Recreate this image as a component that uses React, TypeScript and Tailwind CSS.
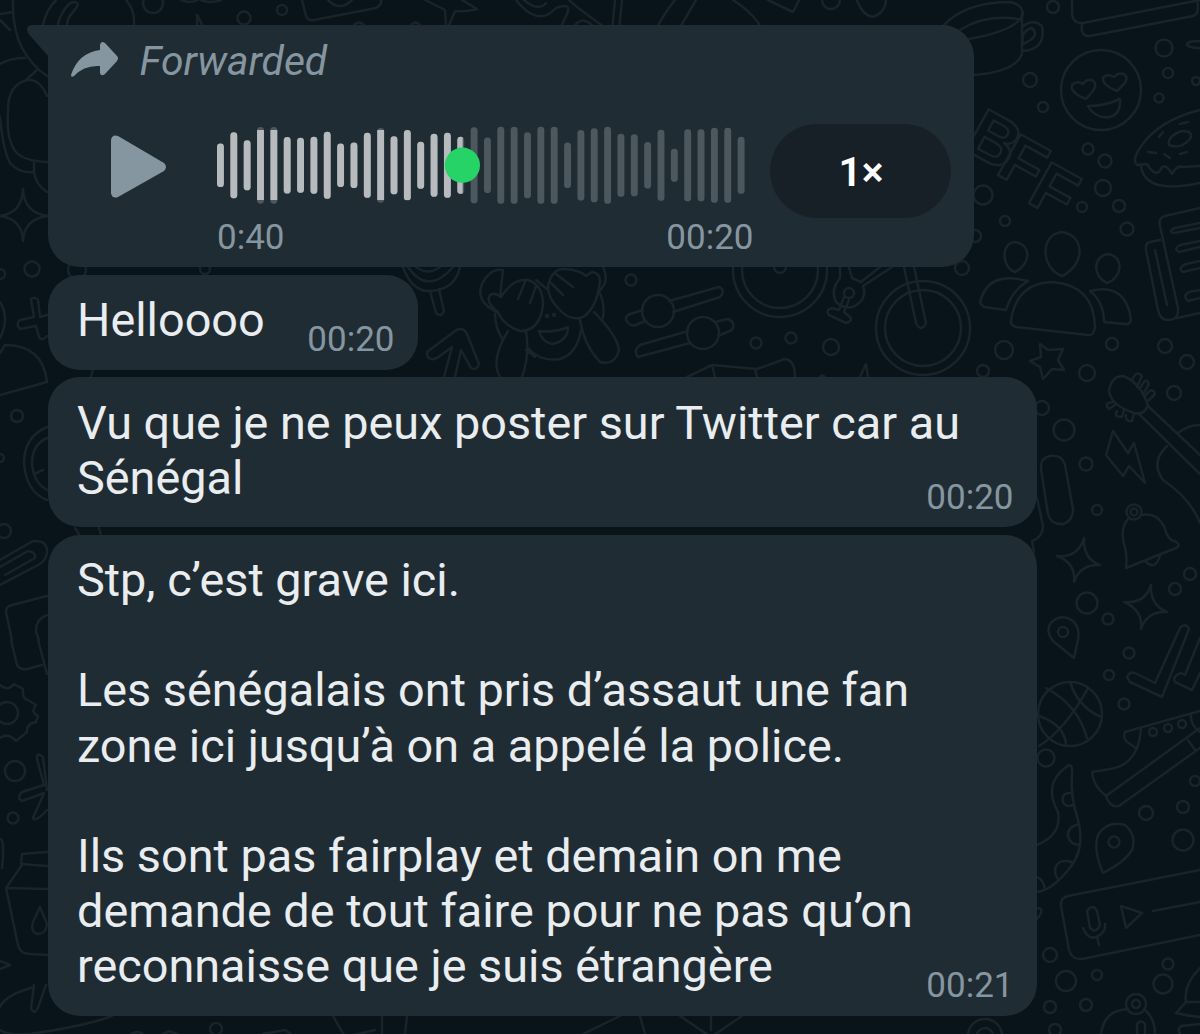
import React from 'react';
import clsx from 'clsx';

// [cx, cy, r]
const BUBBLES: number[][] = [
  [153, 3, 10], [244, 18, 6.5], [282, 10, 5], [32, 269, 7.5], [0, 274, 5], [831, 0, 9],
  [1053, 7, 6], [1164, 48, 8.5], [1168, 73, 5], [1159, 98, 4.5], [1196, 81, 4], [1030, 80, 7], [1043, 107, 5],
  [1088, 149, 5.5], [1105, 161, 6.5], [1103, 188, 8], [1082, 207, 5], [1119, 206, 6], [1127, 229, 6.5],
  [983, 195, 9.5], [1005, 221, 5], [975, 236, 6], [962, 268, 7],
  [831, 347, 8], [983, 371, 6], [1004, 350, 9], [1087, 373, 8], [1112, 344, 6], [1165, 346, 7], [1187, 362, 7],
  [1174, 393, 7], [1042, 408, 7], [1064, 430, 10.5], [1086, 464, 6.5], [1097, 510, 5],
  [1190, 574, 6], [1175, 589, 6], [1087, 603, 10.5], [1108, 619, 5.5], [1129, 653, 5.5], [1109, 675, 5], [1124, 704, 5.5],
  [1046, 758, 8.5], [1195, 781, 5], [1183, 807, 6], [1146, 813, 7], [1183, 840, 10.5],
  [1050, 955, 7], [1066, 981, 10], [1097, 975, 5], [1168, 964, 5.5], [1163, 984, 9.5], [1050, 1007, 6], [1086, 1005, 6], [1055, 1030, 6],
  [631, 280, 5.5], [756, 343, 5.5], [791, 338, 5.5], [17, 416, 6], [0, 458, 4], [4, 531, 7],
  [15, 771, 10], [13, 818, 5.5], [1101, 90, 40], [923, 328, 47], [923, 328, 38], [780, 270, 47], [780, 270, 38], [780, 267, 6],
  [849, 293, 5], [1134, 512, 7.5], [1134, 512, 3.5], [1063, 632, 5], [1070, 714, 32],
  [1153, 732, 4], [1168, 728, 4], [1182, 724, 4], [1114, 842, 5.5], [1136, 1004, 10], [1136, 1004, 4],
  [658, 311, 16], [703, 333, 16], [7, 713, 11], [77, 270, 9], [439, 1051, 5], [216, 1029, 6], [523, 1053, 10],
  [985, 1036, 8], [985, 1036, 17], [205, 269, 5], [547, 316, 1], [554, 315, 1],
];

const DOODLES: string[] = [
  // top left
  'M13 0Q12 28 22 48Q32 66 47 76M0 14L13 12M0 20L10 30M0 64Q10 58 25 58M43 25Q46 10 56 0M58 24Q61 12 69 4Q75 0 78 4Q77 8 73 12Q68 17 67 24M126 0Q135 10 134 25',
  'M37 70L26 80M47 96Q40 79 28 80Q8 84 8 110Q6 140 16 152Q24 161 47 162M0 117Q3 150 10 163Q20 174 34 172L34 163M34 172Q36 185 47 192',
  'M23 189Q24 213 48 216Q24 219 23 241Q22 219 0 216Q22 213 23 189Z',
  'M181 0Q190 4 198 0M201 0Q210 4 221 0M197 25V15Q200 20 202 25M302 0L306 16Q308 21 314 20L376 8Q382 5 381 0M328 0Q340 12 352 0M354 25Q359 20 364 25M411 25Q415 20 420 25',
  'M425 0L445 10L446 25M449 25L455 11Q465 12 477 9L462 0M516 0Q538 28 556 8Q572 2 567 14L559 31M524 0Q538 12 546 3M569 0L577 7Q590 17 610 31M571 31Q582 10 597 31M615 0L612 31M622 0L619 31M675 0Q665 12 655 31M696 0L678 31M733 0Q755 14 763 31M768 0L793 12L799 0',
  // cup, book
  'M857 0Q862 15 873 17Q885 13 886 0M943 26Q965 2 1010 2Q1022 4 1023 14Q1018 30 969 39M960 30Q985 14 1018 19M1022 14V54Q1015 72 973 75M1022 27Q1033 18 1042 26Q1046 50 1022 51M1023 44Q1020 31 1032 28Q1041 36 1023 44',
  'M1072 0V14Q1073 24 1083 23L1200 0M1082 24Q1080 37 1090 36L1193 16Q1200 14 1197 0M1200 41Q1186 41 1187 45Q1190 48 1200 48',
  // eyes and smile
  'M1086 99Q1070 93 1072 85Q1077 80 1083 84Q1086 79 1092 80Q1098 84 1093 91ZM1117 91Q1102 85 1103 78Q1107 73 1114 77Q1118 72 1124 74Q1129 78 1124 84Z',
  'M1088 106Q1105 106 1120 99Q1121 114 1110 117Q1095 119 1088 106Z',
  // donut
  'M1200 110Q1160 120 1142 145Q1131 160 1137 165L1147 164Q1157 180 1162 167Q1166 164 1172 174Q1177 165 1182 167L1200 166M1141 166Q1145 195 1200 183M1169 145Q1167 136 1182 131Q1194 131 1190 139Q1180 150 1169 145M1180 124L1188 122M1163 132L1159 137M1148 152L1156 153M1164 154L1170 158M1180 154L1187 152',
  // people
  'M1015 242C1000 243 1002 268 1015 272C1030 265 1033 245 1015 242ZM1062 232C1040 234 1040 268 1062 276C1085 265 1086 236 1062 232ZM1108 254C1093 256 1092 276 1107 283C1122 278 1125 257 1108 254Z',
  'M980 303Q987 270 1028 281Q1012 290 1006 310L984 307ZM1011 320Q1017 283 1052 282Q1094 285 1095 327Q1094 336 1088 335L1016 327Q1010 325 1011 320ZM1090 291Q1126 282 1131 320Q1130 325 1125 324L1104 322Q1104 302 1090 291Z',
  // newspaper
  'M1200 208L1165 216Q1158 218 1160 226L1178 308Q1179 320 1168 320Q1160 320 1158 310L1146 250Q1145 243 1150 242L1160 240M1155 250L1167 305M1177 318L1200 313M1200 223L1175 228Q1168 231 1174 233L1200 228M1200 241L1180 245Q1173 249 1179 252L1200 247M1200 261L1186 264Q1177 268 1183 272L1200 268M1200 290L1189 292Q1182 296 1188 301L1200 298',
  // bike
  'M904 267L916 323Q921 333 926 323L914 267M840 267V278Q830 290 836 302Q850 314 862 300Q866 292 863 286L892 267M849 267L852 278L861 282L880 267M844 297L839 310L832 308Q825 310 829 315L846 323Q853 321 850 317L844 312L849 300',
  'M1040 344L1048 350L1063 349L1058 360L1064 370L1052 369L1043 379L1040 367L1030 361L1041 357Z',
  // guitar, bolt
  'M1123 376Q1140 382 1148 405Q1144 416 1134 413Q1110 405 1109 390Q1112 376 1123 376ZM1132 381Q1136 369 1142 376L1137 387M1141 387Q1146 376 1149 384L1143 394M1146 395Q1152 386 1155 394L1149 400M1113 402Q1103 403 1109 409L1115 405M1117 411Q1113 417 1122 417L1124 410M1126 415Q1125 422 1132 421L1134 413M1148 406L1200 455M1138 413L1200 474M1178 433Q1188 425 1200 425M1167 446Q1150 462 1163 480Q1190 498 1200 523',
  'M1113 431L1128 453L1134 443L1145 483L1129 466L1123 476L1106 455Z',
  'M1041 469Q1040 458 1050 456Q1062 454 1065 465L1073 509Q1073 521 1063 524Q1051 525 1048 514ZM1037 498L1043 526Q1043 537 1032 541L1034 552',
  'M1129 518Q1121 525 1123 540Q1128 555 1126 568L1176 548Q1182 544 1174 541Q1169 540 1166 532Q1160 512 1141 515M1146 562Q1156 571 1160 555',
  'M1084 538Q1083 559 1100 565Q1080 564 1074 582Q1076 563 1057 556Q1078 558 1084 538ZM1151 585Q1150 605 1167 612Q1147 611 1141 629Q1143 610 1124 602Q1145 604 1151 585Z',
  'M1074 658L1053 641Q1044 629 1053 621Q1063 613 1074 622Q1080 628 1078 640Z',
  'M1127 677Q1130 671 1135 673L1155 683L1180 628Q1186 622 1189 629L1162 697L1130 682ZM1200 638L1185 675L1181 673Q1172 676 1175 682L1192 690L1200 673',
  // ball, shoe
  'M1039 746Q1065 730 1088 688M1046 688Q1078 705 1087 738M1070 682Q1078 707 1101 717M1039 716Q1065 725 1066 745',
  'M1200 711L1125 732Q1123 738 1126 741L1137 749M1141 729Q1138 765 1110 769L1092 772Q1093 786 1106 796Q1110 808 1119 806L1200 748M1106 796L1200 728M1188 740L1195 750M1191 714Q1190 725 1200 732',
  // tentacle
  'M1037 845Q1062 835 1058 812Q1043 785 1065 768Q1073 760 1072 775Q1070 795 1078 820Q1086 850 1068 870Q1052 890 1037 892M1070 793Q1061 793 1063 802Q1066 808 1073 805M1079 824Q1067 827 1068 836Q1070 845 1080 845M1072 862Q1056 858 1055 871Q1055 876 1059 880M1037 877Q1043 879 1045 889M1037 908Q1046 908 1037 919',
  'M1103 873Q1093 850 1098 835Q1107 820 1125 825Q1137 835 1132 850Q1125 862 1103 873Z',
  // voice card
  'M1200 870L1068 896Q1060 898 1061 906L1069 950Q1072 960 1082 959L1200 935M1087 911Q1093 903 1097 911L1100 925Q1096 934 1090 928ZM1083 928Q1088 940 1096 937Q1106 933 1105 924M1097 937L1099 945M1121 906L1142 913L1126 928ZM1153 911L1200 902',
  'M1101 1034Q1104 1010 1128 1009M1144 1009Q1155 1018 1155 1034M1137 1034V1024Q1141 1019 1145 1024V1034M1200 968Q1183 985 1186 1002L1200 1002M1186 1002L1176 1013Q1188 1016 1200 1017M1200 1024L1181 1026Q1177 1030 1180 1034',
  // magnifier, arrow
  'M403 267Q412 292 430 291Q455 290 460 267M408 267Q428 296 453 267M416 267Q428 276 440 267M430 291L436 313Q441 318 444 311L439 289M427 352L455 331Q463 326 467 334L479 364Q477 371 471 368L461 350L455 377M444 377L452 347L437 358Q427 362 427 352',
  // face behind hands
  'M498 312Q485 302 490 295Q495 292 501 297Q513 278 528 280Q543 285 543 305Q540 331 520 331Q503 325 498 312ZM525 282L518 299M536 286L530 303M548 286Q552 268 565 269Q580 270 586 276L592 272Q600 273 600 281Q597 308 583 317Q570 322 558 308Q548 298 548 286ZM556 274L573 287M551 283L563 295M497 312Q475 302 482 284Q490 268 503 270L500 297M536 280L548 290M495 314Q495 328 503 340M528 348Q540 362 560 359Q577 354 581 330M508 331Q490 360 500 377M526 331Q530 355 522 377M526 350L535 357M580 320Q584 345 600 362Q615 366 619 350Q617 335 594 312M603 267Q610 282 599 291Q605 303 603 318',
  'M539 331Q555 333 568 327Q568 341 552 344Q542 342 539 331Z',
  'M643 310L633 313Q625 315 626 320Q630 327 636 325L645 321M673 312L720 297Q726 290 719 287L669 301M688 331L640 345Q633 350 638 357L690 343M715 322L728 319Q736 322 732 330L718 336M687 377L712 365L757 369L785 359Q795 360 795 377M712 365L715 377M755 369L757 377M820 377Q822 374 825 377M860 377L866 364L868 377',
  // left edge
  'M31 299Q35 296 38 300L40 317L47 315M31 299L34 317L20 320Q15 324 20 329L36 326L39 337Q42 342 47 336M0 395L47 382Q43 345 5 345L0 353M0 302Q10 318 0 338M93 369L91 377M47 427Q24 437 24 463Q26 492 47 500M47 438Q32 445 32 463Q33 482 47 490M34 474L43 470',
  'M0 560L33 541Q48 540 47 553Q45 562 38 565L0 585M0 567L28 551Q36 552 35 558L5 575M75 528Q78 532 79 535M99 528L101 535M12 640L6 612Q6 606 12 605L47 596M47 615Q35 620 36 632L39 640M11 640L17 665Q20 670 27 669L42 665M38 640L47 674',
  'M0 685Q8 692 14 684L23 689Q22 699 28 700L36 705Q30 712 38 716L36 722Q26 724 27 732L16 741Q8 732 0 738M47 790L43 757Q37 751 37 759L44 785L22 792Q16 798 22 801L44 793L33 818Q35 823 47 810M0 839Q5 839 2 868M47 852L22 854L21 864L47 866M22 865L6 888L47 889M6 888L18 945Q20 954 30 954L47 955M40 907L33 922Q30 932 38 934Q46 934 47 924ZM0 961L10 965L0 969',
  'M34 985L31 1008Q35 1018 40 1002L46 985M34 987Q5 995 0 1007M0 1030Q10 1036 30 1034Q85 1026 112 1016M131 1034Q138 1030 143 1034M163 1034L169 1031L192 1040M263 1034L285 1030L291 1034M333 1016L345 1037L375 1030M382 1016V1034M405 1034L407 1016M583 1034L620 1016M640 1016L645 1034M680 1016L711 1037L742 1016M711 1030V1016',
];

const Wallpaper = () => (
  <svg
    className="col-start-1 row-start-1"
    width="1200"
    height="1034"
    viewBox="0 0 1200 1034"
    fill="none"
    stroke="#18232a"
    strokeWidth="2.5"
    strokeLinecap="round"
    strokeLinejoin="round"
  >
    {DOODLES.map((d, i) => <path key={i} d={d} />)}
    {BUBBLES.map(([cx, cy, r], i) => <circle key={i} cx={cx} cy={cy} r={r} />)}
    <g fontFamily="'Liberation Sans', sans-serif" fontSize="68" fontWeight="700">
      <text transform="translate(962 148) rotate(29)">B</text>
      <text transform="translate(994 173) rotate(29)">F</text>
      <text transform="translate(1025 201) rotate(29)">F</text>
    </g>
  </svg>
);

// Height of every bar in the voice note wave
const WAVE = [
  43.5, 66, 50, 76.7, 76.7, 56.5, 55, 57, 67, 43.5, 45.5, 65, 74.7, 58, 70.5, 47, 63, 65, 57, 76,
  55.5, 77, 77, 66, 77, 77, 45.5, 70.5, 74, 77, 63, 62, 46.5, 71, 33, 72, 72, 75, 75, 57,
];

const Waveform = () => {
  const bars = WAVE.map((h, i) => (
    <rect key={i} x={i * 13.35} y={39.3 - h / 2} width="6.9" height={h} rx="3.4" />
  ));
  return (
    <svg className="block" width="536" height="78" viewBox="0 0 536 78">
      <clipPath id="played"><rect x="0" y="4" width="245.7" height="70" /></clipPath>
      <g fill="#4d575e">{bars}</g>
      <g fill="#b7bbbe" clipPath="url(#played)">{bars}</g>
      <circle cx="245.4" cy="39.2" r="17.6" fill="#25d366" />
    </svg>
  );
};

interface MessageProps {
  lines: string[];
  time: string;
  className: string;
}

const Time = ({ children }: { children: string }) => (
  <span className="text-[35px] leading-[40px] text-[#8696a0] whitespace-nowrap">{children}</span>
);

const Message: React.FC<MessageProps> = ({ lines, time, className }) => (
  <div className={clsx('flex justify-between rounded-[32px] bg-[#202c33] pl-[29.5px] pr-[23.5px] pt-[18.5px]', className)}>
    <div className="flex w-0 flex-col items-start text-[46.8px] leading-[55.2px] text-[#e9edef] whitespace-nowrap">
      {lines.map((line, i) => (
        <p key={i} className="h-[55.2px]">{line}</p>
      ))}
    </div>
    <div className="flex items-end">
      <Time>{time}</Time>
    </div>
  </div>
);

const VoiceNote = () => (
  <div className="relative h-[242px] w-[926px] rounded-[32px] rounded-tl-none bg-[#202c33]">
    <svg className="absolute -left-[21px] top-0" width="22" height="32" viewBox="0 0 22 32" fill="#202c33">
      <path d="M5 0H22V32L1.5 9Q-2.500 1 5 0Z" />
    </svg>
    <div className="flex h-[72px] items-center pl-[22px]">
      <svg className="mb-[4px]" width="48" height="37" viewBox="70 40 48 37" fill="#8696a0">
        <path d="M100 49Q78 52 71 74Q71 77 74 75Q84 64 100 65V72Q101 76 105 73L117 60Q119 57 117 55L105 42Q101 39 100 44Z" />
      </svg>
      <span className="ml-[22px] text-[40.8px] italic leading-[48px] text-[#8696a0]">Forwarded</span>
    </div>
    <div className="flex pl-[62px]">
      <svg className="mt-[36.5px]" width="58" height="66" viewBox="0 0 58 66" fill="#8696a0">
        <path d="M1 6Q2 0 8 2L54 29Q58 33 54 37L8 63Q2 65 1 59Z" />
      </svg>
      <div className="ml-[49px] mt-[29px] w-[537px]">
        <Waveform />
        <div className="mt-[14px] flex justify-between pl-[0.5px]">
          <Time>0:40</Time>
          <Time>00:20</Time>
        </div>
      </div>
      <button className="ml-[16px] mt-[27px] flex h-[94px] w-[181px] items-center justify-center rounded-full bg-[#182027] pl-[2px] pt-[3px] text-[41px] font-semibold text-white">1×</button>
    </div>
  </div>
);

const App: React.FC = () => {
  return (
    <div className="grid h-[1034px] w-[1200px] overflow-hidden bg-[#08131a]" style={{ fontFamily: "Roboto, 'Liberation Sans', sans-serif" }}>
      <Wallpaper />
      <div className="col-start-1 row-start-1 flex flex-col items-start gap-[7.5px] pl-[47.5px] pt-[25px]">
        <VoiceNote />
        <Message className="h-[95px] w-[370.5px] pb-[10px]" lines={['Helloooo']} time="00:20" />
        <Message
          className="h-[150px] w-[989.5px] pb-[9px]"
          lines={['Vu que je ne peux poster sur Twitter car au', 'Sénégal']}
          time="00:20"
        />
        <Message
          className="h-[481px] w-[989.5px] pb-[9.5px]"
          lines={[
            'Stp, c’est grave ici.',
            '',
            'Les sénégalais ont pris d’assaut une fan',
            'zone ici jusqu’à on a appelé la police.',
            '',
            'Ils sont pas fairplay et demain on me',
            'demande de tout faire pour ne pas qu’on',
            'reconnaisse que je suis étrangère',
          ]}
          time="00:21"
        />
      </div>
    </div>
  );
};

export default App;
